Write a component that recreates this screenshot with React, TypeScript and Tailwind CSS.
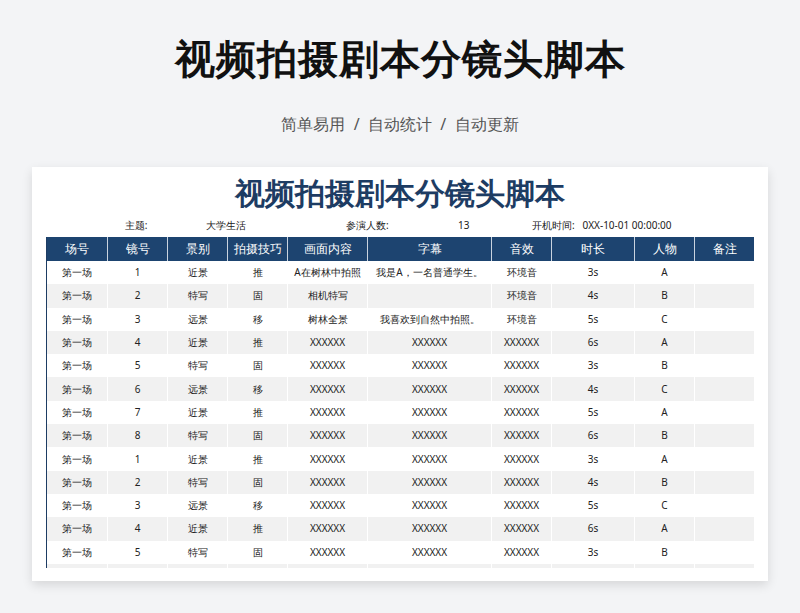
const cols = ['场号', '镜号', '景别', '拍摄技巧', '画面内容', '字幕', '音效', '时长', '人物', '备注'];
const widths = 'grid-cols-[61px_60px_60px_60px_80px_124px_60px_83px_60px_60px]';

const shots = ['近景', '特写', '远景'];
const tech = ['推', '固', '移'];
const nums = [1, 2, 3, 4, 5, 6, 7, 8, 1, 2, 3, 4, 5, 6];
const rows = nums.map((n, i) => [
  '第一场',
  String(n),
  shots[(n - 1) % 3],
  tech[(n - 1) % 3],
  i === 0 ? 'A在树林中拍照' : i === 1 ? '相机特写' : i === 2 ? '树林全景' : 'XXXXXX',
  i === 0 ? '我是A，一名普通学生。' : i === 1 ? '' : i === 2 ? '我喜欢到自然中拍照。' : 'XXXXXX',
  i < 3 ? '环境音' : 'XXXXXX',
  `${[3, 4, 5, 6][i % 4]}s`,
  ['A', 'B', 'C'][(n - 1) % 3],
  '',
]);

export default function App() {
  return (
    <div className="w-[800px] h-[613px] bg-[#f3f4f6] flex flex-col items-center font-['Noto_Sans_CJK_SC',sans-serif] overflow-hidden">
      <h1 className="mt-[30px] text-[40px] leading-[56px] font-bold text-[#111] tracking-[1px]">视频拍摄剧本分镜头脚本</h1>
      <p className="mt-[26px] text-[16px] leading-[24px] text-[#555] whitespace-pre">简单易用  /  自动统计  /  自动更新</p>
      <div className="mt-[31px] w-[736px] h-[414px] bg-white shadow-[0_4px_10px_rgba(0,0,0,0.12)] flex flex-col items-center">
        <div className="mt-[6px] text-[30px] leading-[40px] text-[#1d3c63] font-bold font-['Noto_Serif_CJK_SC','Liberation_Serif',serif]">视频拍摄剧本分镜头脚本</div>
        <div className="w-[708px] h-[24px] grid grid-cols-[60px_60px_120px_60px_120px_60px_228px] items-center text-[10px] text-[#222]">
          <span />
          <span className="text-center">主题:</span>
          <span className="text-center">大学生活</span>
          <span />
          <span className="text-left">参演人数:</span>
          <span className="text-left -ml-[8px]">13</span>
          <span className="pl-[6px]">开机时间:&nbsp;&nbsp;&nbsp;0XX-10-01 00:00:00</span>
        </div>
        <div className="w-[708px] h-[331px] overflow-hidden border-l border-[#1d3c63] font-['Liberation_Sans','Noto_Sans_CJK_SC',sans-serif]">
          <div className={`grid ${widths} h-[24px] bg-[#1d4470] text-white text-[12px]`}>
            {cols.map((c) => (
              <div key={c} className="flex items-center justify-center border-r border-[#c9d3df] last:border-r-0 font-['Noto_Sans_CJK_SC',sans-serif]">{c}</div>
            ))}
          </div>
          {rows.map((r, i) => (
            <div key={i} className={`grid ${widths} h-[23.3px] text-[10px] text-[#222] ${i % 2 ? 'bg-[#f1f1f1]' : 'bg-white'}`}>
              {r.map((c, j) => (
                <div key={j} className="flex items-center justify-center border-r border-white last:border-r-0 whitespace-nowrap overflow-hidden">{i < 13 ? c : ''}</div>
              ))}
            </div>
          ))}
        </div>
      </div>
    </div>
  );
}
